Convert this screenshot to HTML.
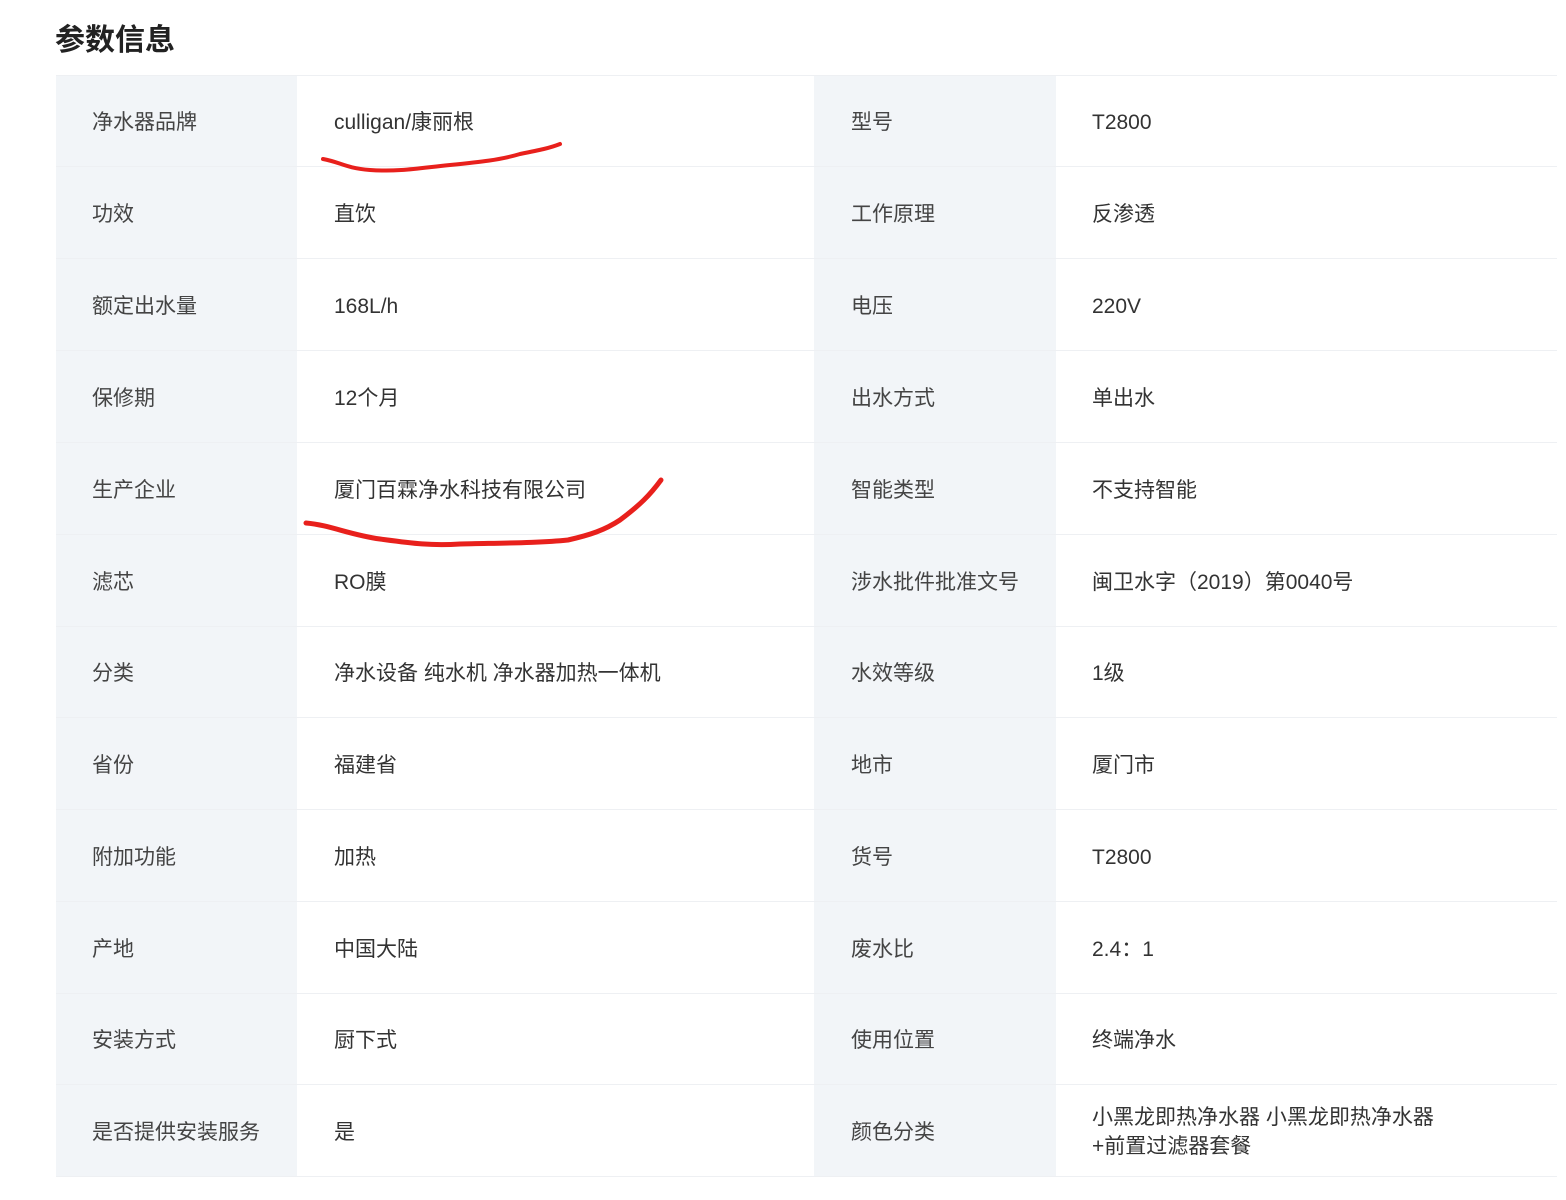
<!DOCTYPE html>
<html><head><meta charset="utf-8"><style>
body{margin:0;background:#fff;width:1566px;height:1200px;overflow:hidden;font-family:"Liberation Sans","Noto Sans CJK SC",sans-serif;color:#333;}
h1{position:absolute;left:55px;top:15px;margin:0;font-size:30px;font-weight:bold;color:#222;}
.t{position:absolute;left:56px;top:75px;width:1501px;}
.r{display:flex;height:91px;border-bottom:1px solid #eef0f3;box-sizing:border-box;}
.r:first-child{border-top:1px solid #eef0f3}
.c{display:flex;align-items:center;font-size:21px;line-height:29px;box-sizing:border-box;padding-top:3px}
.l1{width:241px;padding-left:36px;background:#f2f5f8;color:#444}
.v1{width:517px;padding-left:37px}
.l2{width:242px;padding-left:37px;background:#f2f5f8;color:#444}
.v2{flex:1;padding-left:36px}
</style></head><body>
<h1>参数信息</h1>
<div class="t">
<div class="r" style="height:92px"><div class="c l1">净水器品牌</div><div class="c v1">culligan/康丽根</div><div class="c l2">型号</div><div class="c v2">T2800</div></div>
<div class="r" style="height:92px"><div class="c l1">功效</div><div class="c v1">直饮</div><div class="c l2">工作原理</div><div class="c v2">反渗透</div></div>
<div class="r" style="height:92px"><div class="c l1">额定出水量</div><div class="c v1">168L/h</div><div class="c l2">电压</div><div class="c v2">220V</div></div>
<div class="r" style="height:92px"><div class="c l1">保修期</div><div class="c v1">12个月</div><div class="c l2">出水方式</div><div class="c v2">单出水</div></div>
<div class="r" style="height:92px"><div class="c l1">生产企业</div><div class="c v1">厦门百霖净水科技有限公司</div><div class="c l2">智能类型</div><div class="c v2">不支持智能</div></div>
<div class="r" style="height:92px"><div class="c l1">滤芯</div><div class="c v1">RO膜</div><div class="c l2">涉水批件批准文号</div><div class="c v2">闽卫水字（2019）第0040号</div></div>
<div class="r"><div class="c l1">分类</div><div class="c v1">净水设备 纯水机 净水器加热一体机</div><div class="c l2">水效等级</div><div class="c v2">1级</div></div>
<div class="r" style="height:92px"><div class="c l1">省份</div><div class="c v1">福建省</div><div class="c l2">地市</div><div class="c v2">厦门市</div></div>
<div class="r" style="height:92px"><div class="c l1">附加功能</div><div class="c v1">加热</div><div class="c l2">货号</div><div class="c v2">T2800</div></div>
<div class="r" style="height:92px"><div class="c l1">产地</div><div class="c v1">中国大陆</div><div class="c l2">废水比</div><div class="c v2">2.4：1</div></div>
<div class="r"><div class="c l1">安装方式</div><div class="c v1">厨下式</div><div class="c l2">使用位置</div><div class="c v2">终端净水</div></div>
<div class="r" style="height:92px"><div class="c l1">是否提供安装服务</div><div class="c v1">是</div><div class="c l2">颜色分类</div><div class="c v2">小黑龙即热净水器 小黑龙即热净水器<br>+前置过滤器套餐</div></div>
</div>
<svg style="position:absolute;left:0;top:0" width="1566" height="1200">
<path d="M323 159 C340 162 345 168 370 170 C400 172 420 168 450 165 C480 162 500 160 520 154 C540 150 550 148 560 144" fill="none" stroke="#e8201c" stroke-width="4" stroke-linecap="round"/>
<path d="M306 523 C330 525 350 535 380 539 C410 543 430 546 460 544 C500 543 540 543 568 540 C590 535 605 530 620 520 C640 505 650 495 661 480" fill="none" stroke="#e8201c" stroke-width="5" stroke-linecap="round"/>
</svg>
</body></html>
